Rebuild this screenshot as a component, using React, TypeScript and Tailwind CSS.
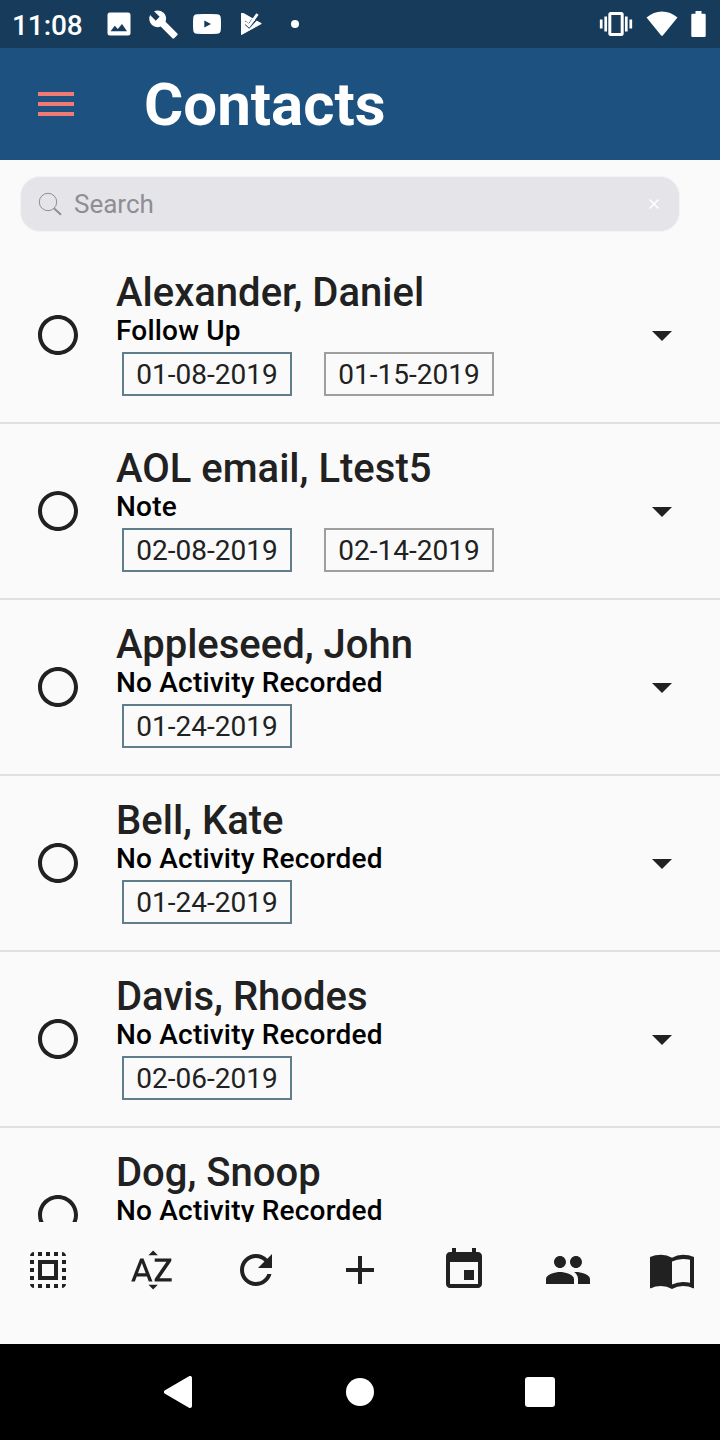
import React from "react";

type Contact = { name: string; activity: string; dates: string[] };

const contacts: Contact[] = [
  { name: "Alexander, Daniel", activity: "Follow Up", dates: ["01-08-2019", "01-15-2019"] },
  { name: "AOL email, Ltest5", activity: "Note", dates: ["02-08-2019", "02-14-2019"] },
  { name: "Appleseed, John", activity: "No Activity Recorded", dates: ["01-24-2019"] },
  { name: "Bell, Kate", activity: "No Activity Recorded", dates: ["01-24-2019"] },
  { name: "Davis, Rhodes", activity: "No Activity Recorded", dates: ["02-06-2019"] },
  { name: "Dog, Snoop", activity: "No Activity Recorded", dates: [] },
];

function Icon({ d, className = "size-12" }: { d: string; className?: string }) {
  return (
    <svg viewBox="0 0 24 24" fill="currentColor" className={`shrink-0 ${className}`}>
      <path d={d} />
    </svg>
  );
}

const icons = {
  selectAll:
    "M3 5h2V3c-1.1 0-2 .9-2 2zm0 8h2v-2H3v2zm4 8h2v-2H7v2zM3 9h2V7H3v2zm10-6h-2v2h2V3zm6 0v2h2c0-1.1-.9-2-2-2zM5 21v-2H3c0 1.1.9 2 2 2zm-2-4h2v-2H3v2zM9 3H7v2h2V3zm2 18h2v-2h-2v2zm8-8h2v-2h-2v2zm0 8c1.1 0 2-.9 2-2h-2v2zm0-12h2V7h-2v2zm0 8h2v-2h-2v2zm-4 4h2v-2h-2v2zm0-16h2V3h-2v2zM7 17h10V7H7v10zm2-8h6v6H9V9z",
  sortAZ:
    "M14.94 4.66h-4.72l2.36-2.36zm-4.69 14.71h4.66l-2.33 2.33zM6.1 6.27L1.6 17.73h1.84l.92-2.45h5.11l.92 2.45h1.84L7.74 6.27H6.1zm-1.13 7.37l1.94-5.18 1.94 5.18H4.97zM15.73 16.14h6.12v1.59h-8.53v-1.29l5.92-8.56h-5.88v-1.6h8.3v1.26l-5.93 8.6z",
  refresh:
    "M17.65 6.35C16.2 4.9 14.21 4 12 4c-4.42 0-7.99 3.58-7.99 8s3.57 8 7.99 8c3.73 0 6.84-2.55 7.73-6h-2.08c-.82 2.33-3.04 4-5.65 4-3.31 0-6-2.69-6-6s2.69-6 6-6c1.66 0 3.14.69 4.22 1.78L13 11h7V4l-2.35 2.35z",
  add: "M19 13h-6v6h-2v-6H5v-2h6V5h2v6h6v2z",
  event:
    "M17 12h-5v5h5v-5zM16 1v2H8V1H6v2H5c-1.11 0-1.99.9-1.99 2L3 19c0 1.1.89 2 2 2h14c1.1 0 2-.9 2-2V5c0-1.1-.9-2-2-2h-1V1h-2zm3 18H5V8h14v11z",
  group:
    "M16 11c1.66 0 2.99-1.34 2.99-3S17.66 5 16 5c-1.66 0-3 1.34-3 3s1.34 3 3 3zm-8 0c1.66 0 2.99-1.34 2.99-3S9.66 5 8 5C6.34 5 5 6.34 5 8s1.34 3 3 3zm0 2c-2.33 0-7 1.17-7 3.5V19h14v-2.5c0-2.33-4.67-3.5-7-3.5zm8 0c-.29 0-.62.02-.97.05 1.16.84 1.97 1.97 1.97 3.45V19h6v-2.5c0-2.33-4.67-3.5-7-3.5z",
  caret: "M7 10l5 5 5-5z",
  radio:
    "M12 2C6.48 2 2 6.48 2 12s4.48 10 10 10 10-4.48 10-10S17.52 2 12 2zm0 18c-4.42 0-8-3.58-8-8s3.58-8 8-8 8 3.58 8 8-3.58 8-8 8z",
  menu: "M3 18h18v-2H3v2zm0-5h18v-2H3v2zm0-7v2h18V6H3z",
  wrench:
    "M22.7 19l-9.1-9.1c.9-2.3.4-5-1.5-6.9-2-2-5-2.4-7.4-1.3L9 6 6 9 1.6 4.7C.4 7.1.9 10.1 2.9 12.1c1.9 1.9 4.6 2.4 6.9 1.5l9.1 9.1c.4.4 1 .4 1.4 0l2.3-2.3c.5-.4.5-1.1.1-1.4z",
};

function StatusBar() {
  return (
    <div className="flex h-12 shrink-0 items-center bg-[#163b5b] pr-[14px] pl-3 text-white">
      <span className="w-[95px] pt-1 text-[28px] leading-[44px] font-medium tracking-[-0.1px]">11:08</span>
      <svg viewBox="0 0 24 24" className="size-6" fill="currentColor">
        <path
          fillRule="evenodd"
          d="M3 .5h18Q23.500.500 23.500 3v18Q23.500 23.500 21 23.500H3Q.500 23.500.500 21V3Q.500.500 3 .500zM3.500 19.300h16.500L15 12l-4.200 5-3-3.200z"
        />
      </svg>
      <Icon d={icons.wrench} className="ml-[17px] size-[31px]" />
      <svg viewBox="0 0 28 20" className="ml-[14px] h-5 w-7" fill="currentColor">
        <path
          fillRule="evenodd"
          d="M4 .3Q14-.4 24 .3q3.7.2 3.8 3.7.4 6 0 12-.1 3.500-3.800 3.700-10 .6-20 0Q.3 19.500.2 16q-.4-6 0-12Q.3.5 4 .3zM11.300 6.600v6.800L18 10z"
        />
      </svg>
      <svg viewBox="0 0 22 24" className="ml-[19px] h-6 w-[22px]" fill="none">
        <path d="M1.500 1.300v21.200L21.300 11.600 17 9.300 4 1.800z" fill="white" stroke="white" strokeLinejoin="round" />
        <path d="M5.300 9.200l3.300 2.600 3.600-4.600" stroke="#163b5b" strokeWidth="1" />
        <path d="M5.300 12.100l3.900 3.600L19.800 4" stroke="#163b5b" strokeWidth="1.500" />
        <path d="M5.600 10.700l3.500 3L17.500 2" stroke="white" strokeWidth="2.800" />
      </svg>
      <span className="ml-[29px] size-2 rounded-full bg-white" />
      <div className="ml-auto flex items-center">
        <svg viewBox="0 0 34 24" className="h-6 w-[34px]" fill="none" stroke="currentColor">
          <rect x="10.800" y="1.500" width="12.400" height="21" rx="1" strokeWidth="3" />
          <path d="M6.700 4.500v15M27.300 4.500v15M2.200 7.500v9M31.800 7.500v9" strokeWidth="2.700" />
        </svg>
        <svg viewBox="0 0 32 26" className="ml-[13px] h-[26px] w-8" fill="currentColor">
          <path d="M.5 6.500Q7.500.500 16 .500T31.500 6.500L16.800 24.600q-.8.800-1.600 0z" />
        </svg>
        <svg viewBox="0 0 15 26" className="ml-[13px] h-[26px] w-[15px]" fill="currentColor">
          <path d="M4.500 0h6v2.700h3q1.200 0 1.200 1.200v20.900q0 1.200-1.200 1.200h-12Q.300 26 .300 24.800V3.900Q.300 2.700 1.500 2.700h3z" />
        </svg>
      </div>
    </div>
  );
}

function ContactRow({ contact, expandable }: { contact: Contact; expandable: boolean }) {
  return (
    <li className="flex h-44 shrink-0 items-center border-b-2 border-[#e0e0e0] px-[34px]">
      <Icon d={icons.radio} />
      <div className="ml-[34px] flex h-full flex-1 flex-col pt-[22px] whitespace-nowrap">
        <div className="text-[40px] leading-[46px] font-medium">{contact.name}</div>
        <div className="text-[28px] leading-[30px] font-medium tracking-[0.2px] text-black">{contact.activity}</div>
        <div className="mt-[6px] ml-1.5 flex gap-8">
          {contact.dates.map((date, i) => (
            <span
              key={date}
              className={`flex h-11 w-[170px] items-center justify-center border-2 pt-0.5 text-[28px] leading-[38px] ${
                i === 0 ? "border-[#607d8b]" : "border-[#9e9e9e]"
              }`}
            >
              {date}
            </span>
          ))}
        </div>
      </div>
      {expandable && <Icon d={icons.caret} />}
    </li>
  );
}

export default function App() {
  return (
    <div className="flex h-[1440px] w-[720px] flex-col overflow-hidden bg-[#fafafa] font-[Roboto,sans-serif] text-[#212121]">
      <StatusBar />
      <header className="flex h-28 shrink-0 items-center bg-[#1d517f] pl-8">
        <Icon d={icons.menu} className="size-12 text-[#f07b74]" />
        <h1 className="ml-16 pt-0.5 text-[60px] leading-[70px] font-bold text-white">Contacts</h1>
      </header>
      <main className="flex min-h-0 flex-1 flex-col">
        <div className="my-4 mr-10 ml-5 flex h-14 shrink-0 items-center rounded-[20px] border border-[#f3f3f5] bg-[#e5e4e9] pr-[19px] pl-[17px] text-[#8e8e93]">
          <svg viewBox="0 0 24 24" className="size-6" fill="none" stroke="currentColor">
            <circle cx="10" cy="10" r="8.700" strokeWidth="1" />
            <path d="M16.200 16.500l6.800 6.300" strokeWidth="2" />
          </svg>
          <span className="ml-3 text-[26px]">Search</span>
          <svg viewBox="0 0 12 12" className="ml-auto size-3" fill="none" stroke="white">
            <path d="M1.500 1.500l9 9m0-9l-9 9" strokeWidth="1.500" />
          </svg>
        </div>
        <ul className="flex min-h-0 flex-1 flex-col overflow-hidden">
          {contacts.map((contact) => (
            <ContactRow key={contact.name} contact={contact} expandable={contact.dates.length > 0} />
          ))}
        </ul>
      </main>
      <div className="flex h-[122px] shrink-0 items-start justify-between px-6 pt-6">
        <Icon d={icons.selectAll} />
        <Icon d={icons.sortAZ} />
        <Icon d={icons.refresh} />
        <Icon d={icons.add} />
        <Icon d={icons.event} />
        <Icon d={icons.group} />
        <svg viewBox="0 0 48 48" className="size-12 shrink-0" fill="currentColor">
          <path
            fillRule="evenodd"
            d="M2 11Q7 8.700 13 8.700T24 11.700Q29 8.700 35 8.700T46 11v31.300h-1Q41 40 35 40T24 43Q19 40 13 40T3 42.300H2zM24 15.500v23.100Q29 36 35 36q4 0 7 .7V13.700Q39 13 35 13q-6 0-11 2.500z"
          />
        </svg>
      </div>
      <nav className="flex h-24 shrink-0 items-center bg-black pl-[164px] text-white">
        <svg viewBox="0 0 28 32" className="h-8 w-7" fill="currentColor" stroke="currentColor">
          <path d="M26 2v28L2 16z" strokeWidth="4" strokeLinejoin="round" />
        </svg>
        <span className="ml-[154px] size-7 rounded-full bg-white" />
        <span className="ml-[151px] size-[30px] rounded-[3px] bg-white" />
      </nav>
    </div>
  );
}
